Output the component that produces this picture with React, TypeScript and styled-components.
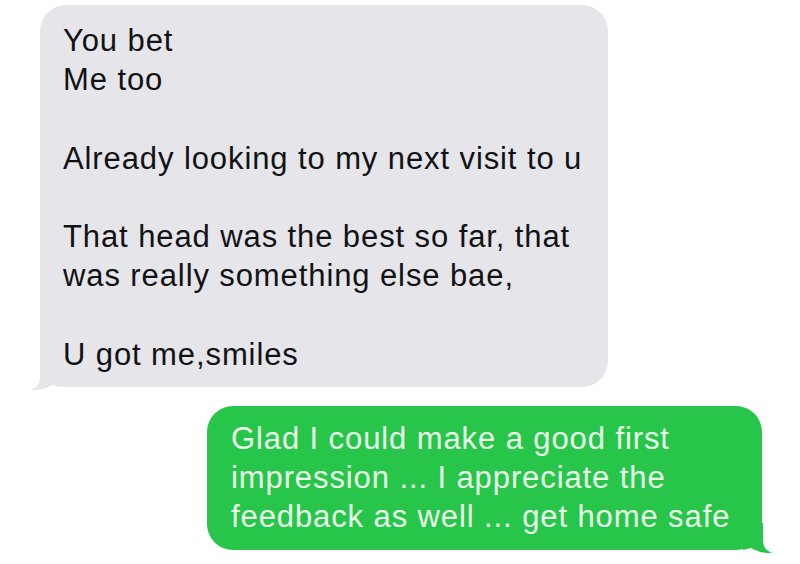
import styled, { createGlobalStyle } from "styled-components";

const GlobalStyle = createGlobalStyle`
  html, body {
    margin: 0;
    padding: 0;
    background: #ffffff;
  }
`;

const Thread = styled.div`
  width: 800px;
  height: 564px;
  box-sizing: border-box;
  padding: 5px 38px 0 40px;
  display: flex;
  flex-direction: column;
  gap: 19px;
  font-family: "Liberation Sans", Arial, sans-serif;
  overflow: hidden;
`;

const Bubble = styled.div<{ $mine?: boolean }>`
  position: relative;
  box-sizing: border-box;
  align-self: ${(p) => (p.$mine ? "flex-end" : "flex-start")};
  width: ${(p) => (p.$mine ? "555px" : "568px")};
  padding: ${(p) => (p.$mine ? "13px 10px 14px 24px" : "16px 10px 13px 23px")};
  border-radius: 26px;
  background: ${(p) => (p.$mine ? "#27c64b" : "#e5e5ea")};
  color: ${(p) => (p.$mine ? "#eafbea" : "#121214")};
  font-size: 31px;
  line-height: 39.2px;
  letter-spacing: 0.9px;
`;

const Tail = styled.svg<{ $mine?: boolean }>`
  position: absolute;
  bottom: -3px;
  width: 30px;
  height: 30px;
  ${(p) => (p.$mine ? "right: -11px; transform: scaleX(-1);" : "left: -10px;")}
`;

const Line = styled.div`
  min-height: 39.2px;
  white-space: nowrap;
`;

function BubbleTail({ mine, color }: { mine?: boolean; color: string }) {
  return (
    <Tail $mine={mine} viewBox="0 0 30 30">
      <path d="M10 0 L10 16 C10 24 7 28 0 30 C9 30.5 16 28.5 22 25 L30 27 L30 0 Z" fill={color} />
    </Tail>
  );
}

const received = [
  "You bet",
  "Me too",
  "",
  "Already looking to my next visit to u",
  "",
  "That head was the best so far, that",
  "was really something else bae,",
  "",
  "U got me,smiles",
];

const sent = [
  "Glad I could make a good first",
  "impression ... I appreciate the",
  "feedback as well ... get home safe",
];

export default function App() {
  return (
    <>
      <GlobalStyle />
      <Thread>
        <Bubble>
          {received.map((t, i) => (
            <Line key={i}>{t}</Line>
          ))}
          <BubbleTail color="#e5e5ea" />
        </Bubble>
        <Bubble $mine>
          {sent.map((t, i) => (
            <Line key={i}>{t}</Line>
          ))}
          <BubbleTail mine color="#27c64b" />
        </Bubble>
      </Thread>
    </>
  );
}
